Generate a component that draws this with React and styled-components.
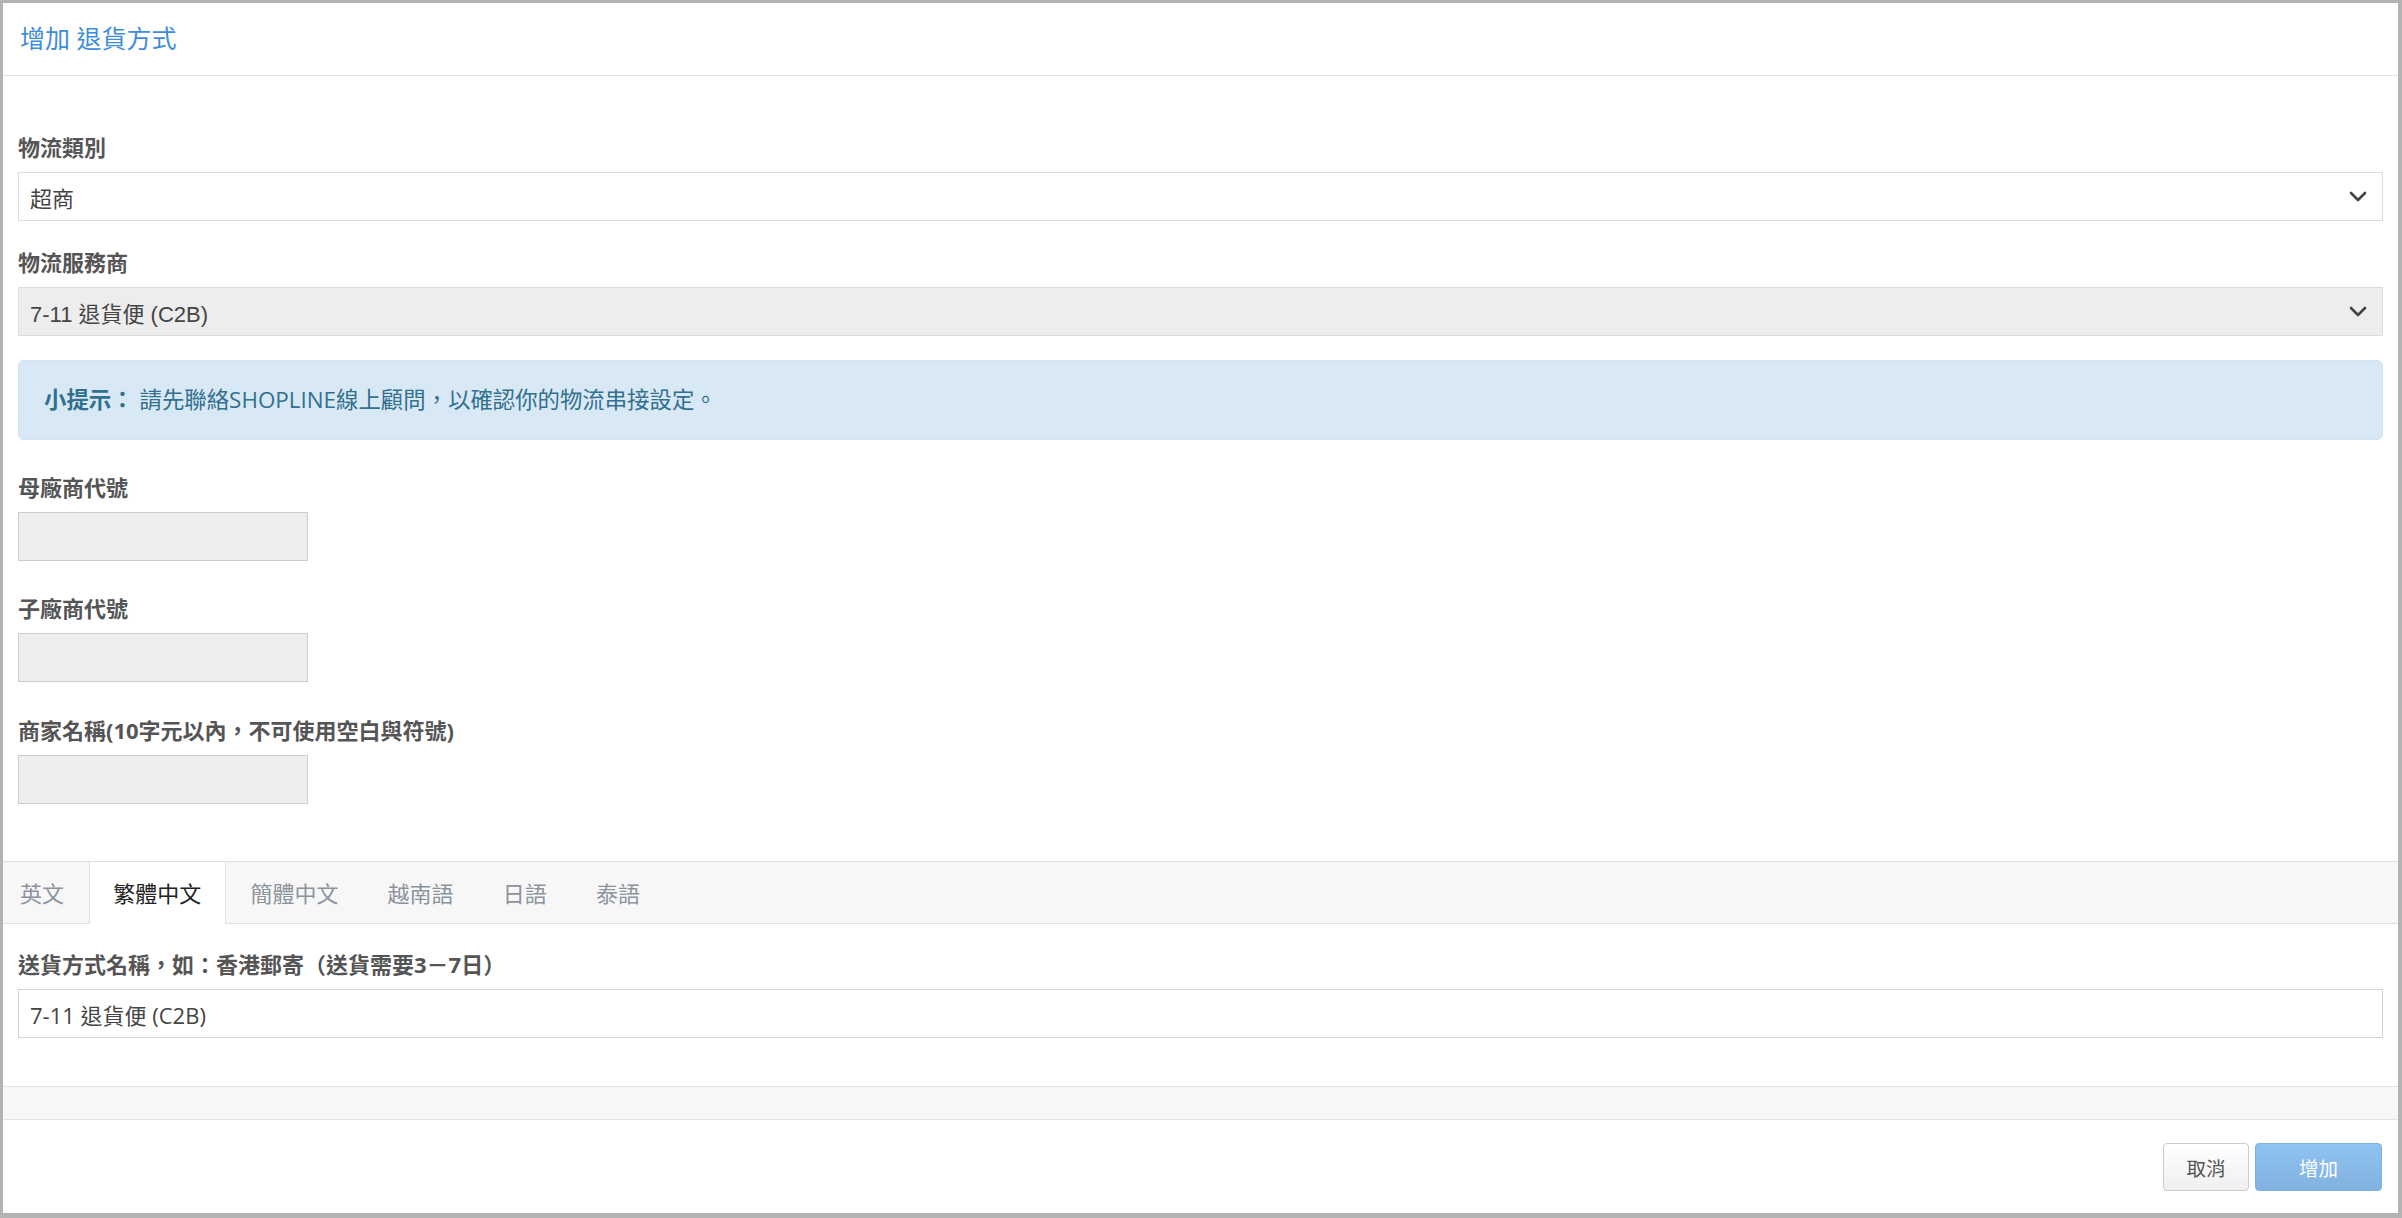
import React from "react";
import styled, { createGlobalStyle } from "styled-components";

const GlobalStyle = createGlobalStyle`
  html, body { margin: 0; padding: 0; background: #fff; }
  * { box-sizing: border-box; }
  body { font-family: "Open Sans", "Noto Sans CJK TC", sans-serif; color: #555; }
`;

const Frame = styled.div`
  width: 2402px;
  height: 1218px;
  border-style: solid;
  border-color: #b3b3b3;
  border-width: 3px 4px 5px 3px;
  background: #fff;
  display: flex;
  flex-direction: column;
  overflow: hidden;
`;

const Header = styled.div`
  height: 73px;
  flex: none;
  display: flex;
  align-items: center;
  padding: 0 17px 2px;
  border-bottom: 1px solid #e3e3e3;
`;

const Title = styled.h4`
  margin: 0;
  font-size: 25px;
  font-weight: 400;
  line-height: 30px;
  color: #3d8ed8;
`;

const Body = styled.div`
  padding: 56px 15px 0;
`;

const FormGroup = styled.div`
  margin-bottom: ${(p) => p.$mb}px;
`;

const Label = styled.div`
  font-size: 22px;
  font-weight: 700;
  line-height: 30px;
  color: #555;
  margin-bottom: 10px;
`;

const SelectBox = styled.div`
  height: 49px;
  display: flex;
  align-items: center;
  justify-content: space-between;
  padding: 0 15px 0 11px;
  border: 1px solid #dcdcdc;
  background: ${(p) => (p.$disabled ? "#ededed" : "#fff")};
  font-family: ${(p) => (p.$arial ? '"Liberation Sans", "Noto Sans CJK TC", sans-serif' : '"Open Sans", "Noto Sans CJK TC", sans-serif')};
  font-size: 22px;
  color: #444;
`;

const Input = styled.div`
  height: 49px;
  width: ${(p) => (p.$short ? "290px" : "100%")};
  display: flex;
  align-items: center;
  padding: 0 11px;
  border: 1px solid ${(p) => (p.$short ? "#cdcdcd" : "#d4d4d4")};
  background: ${(p) => (p.$short ? "#eeeeee" : "#fff")};
  font-size: 22px;
  color: #444;
`;

const Alert = styled.div`
  height: 80px;
  display: flex;
  align-items: center;
  padding: 0 25px 3px;
  margin-bottom: 32px;
  background: #d9e8f5;
  border: 1px solid #d2e3f2;
  border-radius: 6px;
  color: #31708f;
  font-size: 22.4px;
`;

const Strong = styled.strong`
  font-weight: 700;
  margin-right: 6px;
`;

const TabBar = styled.div`
  display: flex;
  height: 63px;
  background: #f7f7f7;
  border-top: 1px solid #e0e0e0;
  border-bottom: 1px solid #e0e0e0;
`;

const Tab = styled.div`
  display: flex;
  align-items: center;
  padding: 0 23.6px 2px;
  font-size: 22px;
  color: ${(p) => (p.$active ? "#222" : "#8c939d")};
  background: ${(p) => (p.$active ? "#fff" : "transparent")};
  border-left: 1px solid ${(p) => (p.$active ? "#e0e0e0" : "transparent")};
  border-right: 1px solid ${(p) => (p.$active ? "#e0e0e0" : "transparent")};
  margin-bottom: -1px;
  &:first-child { padding-left: 16px; }
`;

const TabPanel = styled.div`
  padding: 25px 15px 48px;
`;

const Band = styled.div`
  height: 34px;
  background: #f7f7f7;
  border-top: 1px solid #e3e3e3;
  border-bottom: 1px solid #e3e3e3;
`;

const Footer = styled.div`
  display: flex;
  justify-content: flex-end;
  gap: 6px;
  padding: 23px 16px 0;
`;

const Button = styled.button`
  height: 48px;
  min-width: ${(p) => (p.$primary ? "127px" : "86px")};
  padding: 0 22px;
  font-family: "Open Sans", "Noto Sans CJK TC", sans-serif;
  font-size: 19.5px;
  border-radius: 4px;
  cursor: pointer;
  color: ${(p) => (p.$primary ? "#fff" : "#555")};
  border: 1px solid ${(p) => (p.$primary ? "#7eafdd" : "#cccccc")};
  background: ${(p) =>
    p.$primary
      ? "linear-gradient(#8fc3f1, #82b2df)"
      : "linear-gradient(#ffffff, #efefef)"};
`;

const Chevron = () => (
  <svg width="18" height="11" viewBox="0 0 18 11" fill="none">
    <polyline points="2,2 9,9 16,2" stroke="#444" strokeWidth="2.6" strokeLinecap="round" strokeLinejoin="round" />
  </svg>
);

const tabs = ["英文", "繁體中文", "簡體中文", "越南語", "日語", "泰語"];

export default function App() {
  return (
    <>
      <GlobalStyle />
      <Frame>
        <Header>
          <Title>增加 退貨方式</Title>
        </Header>
        <Body>
          <FormGroup $mb={26}>
            <Label>物流類別</Label>
            <SelectBox>
              <span>超商</span>
              <Chevron />
            </SelectBox>
          </FormGroup>
          <FormGroup $mb={24}>
            <Label>物流服務商</Label>
            <SelectBox $disabled $arial>
              <span>7-11 退貨便 (C2B)</span>
              <Chevron />
            </SelectBox>
          </FormGroup>
          <Alert>
            <Strong>小提示：</Strong>
            <span>請先聯絡SHOPLINE線上顧問，以確認你的物流串接設定。</span>
          </Alert>
          <FormGroup $mb={32}>
            <Label>母廠商代號</Label>
            <Input $short />
          </FormGroup>
          <FormGroup $mb={33}>
            <Label>子廠商代號</Label>
            <Input $short />
          </FormGroup>
          <FormGroup $mb={57}>
            <Label>商家名稱(10字元以內，不可使用空白與符號)</Label>
            <Input $short />
          </FormGroup>
        </Body>
        <TabBar>
          {tabs.map((t) => (
            <Tab key={t} $active={t === "繁體中文"}>
              {t}
            </Tab>
          ))}
        </TabBar>
        <TabPanel>
          <Label>送貨方式名稱，如：香港郵寄（送貨需要3－7日）</Label>
          <Input>7-11 退貨便 (C2B)</Input>
        </TabPanel>
        <Band />
        <Footer>
          <Button>取消</Button>
          <Button $primary>增加</Button>
        </Footer>
      </Frame>
    </>
  );
}
